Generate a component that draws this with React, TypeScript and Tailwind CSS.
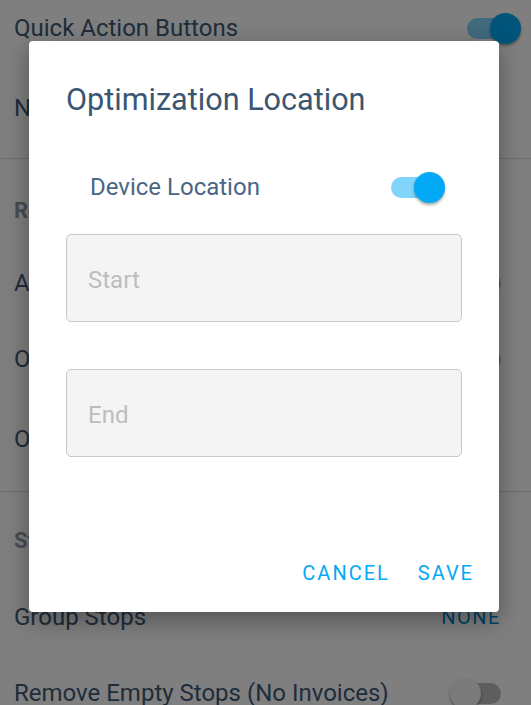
type SwitchProps = { on: boolean };

function Switch({ on }: SwitchProps) {
  // material style switch: thumb overhangs the track
  return (
    <div className="relative w-[60px] h-[31px] flex items-center">
      <div
        className={
          on
            ? "absolute left-[6px] w-[45px] h-[21px] rounded-full bg-[#81d4fa]"
            : "absolute left-[6px] w-[45px] h-[21px] rounded-full bg-[#bdbdbd]"
        }
      />
      <div
        className={
          on
            ? "absolute right-0 w-[31px] h-[31px] rounded-full bg-[#03a9f4] shadow-[0_2px_3px_rgba(0,0,0,0.35)]"
            : "absolute left-0 w-[31px] h-[31px] rounded-full bg-[#f5f5f5] shadow-[0_2px_3px_rgba(0,0,0,0.35)]"
        }
      />
    </div>
  );
}

function Row({
  label,
  right,
  h,
}: {
  label: string;
  right: React.ReactNode;
  h: string;
}) {
  return (
    <div className={`flex items-center justify-between pl-[14px] ${h}`}>
      <span className="text-[24px] text-[#3e5a76]">{label}</span>
      {right}
    </div>
  );
}

export default function App() {
  const font = { fontFamily: "Roboto, 'Noto Sans', sans-serif" };

  return (
    <div className="relative w-[531px] h-[705px] overflow-hidden bg-white" style={font}>
      {/* settings page behind the dialog */}
      <div className="flex flex-col -mt-[12px]">
        <Row
          label="Quick Action Buttons"
          h="h-[80px]"
          right={
            <div className="mr-[10px]">
              <Switch on />
            </div>
          }
        />
        <Row
          label="Navigation App"
          h="h-[80px]"
          right={<span className="mr-[30px] text-[20px] tracking-[1.5px] text-[#0288d1]">GOOGLE</span>}
        />
        <div className="mt-[10px] h-px bg-[#dcdcdc]" />
        <div className="h-[86px] pt-[16px] pl-[14px] flex items-center">
          <span className="text-[22px] font-bold text-[#8e99a4]">Route Optimization</span>
        </div>
        <Row
          label="Auto Optimize Routes"
          h="h-[76px]"
          right={
            <div className="mr-[21px]">
              <Switch on={false} />
            </div>
          }
        />
        <Row
          label="Optimize By Distance"
          h="h-[76px]"
          right={
            <div className="mr-[21px]">
              <Switch on={false} />
            </div>
          }
        />
        <Row
          label="Optimization Location"
          h="h-[84px]"
          right={<span className="mr-[30px] text-[20px] tracking-[1.5px] text-[#0288d1]">DEVICE</span>}
        />
        <div className="mt-[10px] h-px bg-[#dcdcdc]" />
        <div className="h-[87px] pt-[9px] pl-[14px] flex items-center">
          <span className="text-[22px] font-bold text-[#8e99a4]">Stops</span>
        </div>
        <Row
          label="Group Stops"
          h="h-[76px]"
          right={<span className="mr-[30px] text-[20px] tracking-[1.5px] text-[#0288d1]">NONE</span>}
        />
        <Row
          label="Remove Empty Stops (No Invoices)"
          h="h-[76px]"
          right={
            <div className="mr-[21px]">
              <Switch on={false} />
            </div>
          }
        />
      </div>

      {/* scrim + dialog */}
      <div className="absolute inset-0 bg-black/50">
        <div className="ml-[29px] mt-[41px] w-[470px] h-[571px] bg-white rounded-[4px] shadow-[0_8px_24px_rgba(0,0,0,0.35)] flex flex-col px-[37px]">
          <div className="mt-[41px] text-[30.6px] leading-[36px] text-[#3b5670]">
            Optimization Location
          </div>

          <div className="mt-[49px] h-[40px] flex items-center justify-between pl-[24px] pr-[17px]">
            <span className="text-[24px] text-[#4a6682]">Device Location</span>
            <Switch on />
          </div>

          <div className="mt-[27px] h-[88px] rounded-[5px] border-[1.5px] border-[#c9c9c9] bg-[#f4f4f4] flex items-center px-[21px] pt-[3px]">
            <span className="text-[24px] text-[#bdbdbd]">Start</span>
          </div>

          <div className="mt-[47px] h-[88px] rounded-[5px] border-[1.5px] border-[#c9c9c9] bg-[#f4f4f4] flex items-center px-[21px] pt-[3px]">
            <span className="text-[24px] text-[#bdbdbd]">End</span>
          </div>

          <div className="mt-[96px] h-[40px] flex items-center justify-end gap-[28px] -mr-[12px]">
            <span className="text-[20px] tracking-[2px] text-[#03a9f4]">CANCEL</span>
            <span className="text-[20px] tracking-[2px] text-[#03a9f4]">SAVE</span>
          </div>
        </div>
      </div>
    </div>
  );
}
